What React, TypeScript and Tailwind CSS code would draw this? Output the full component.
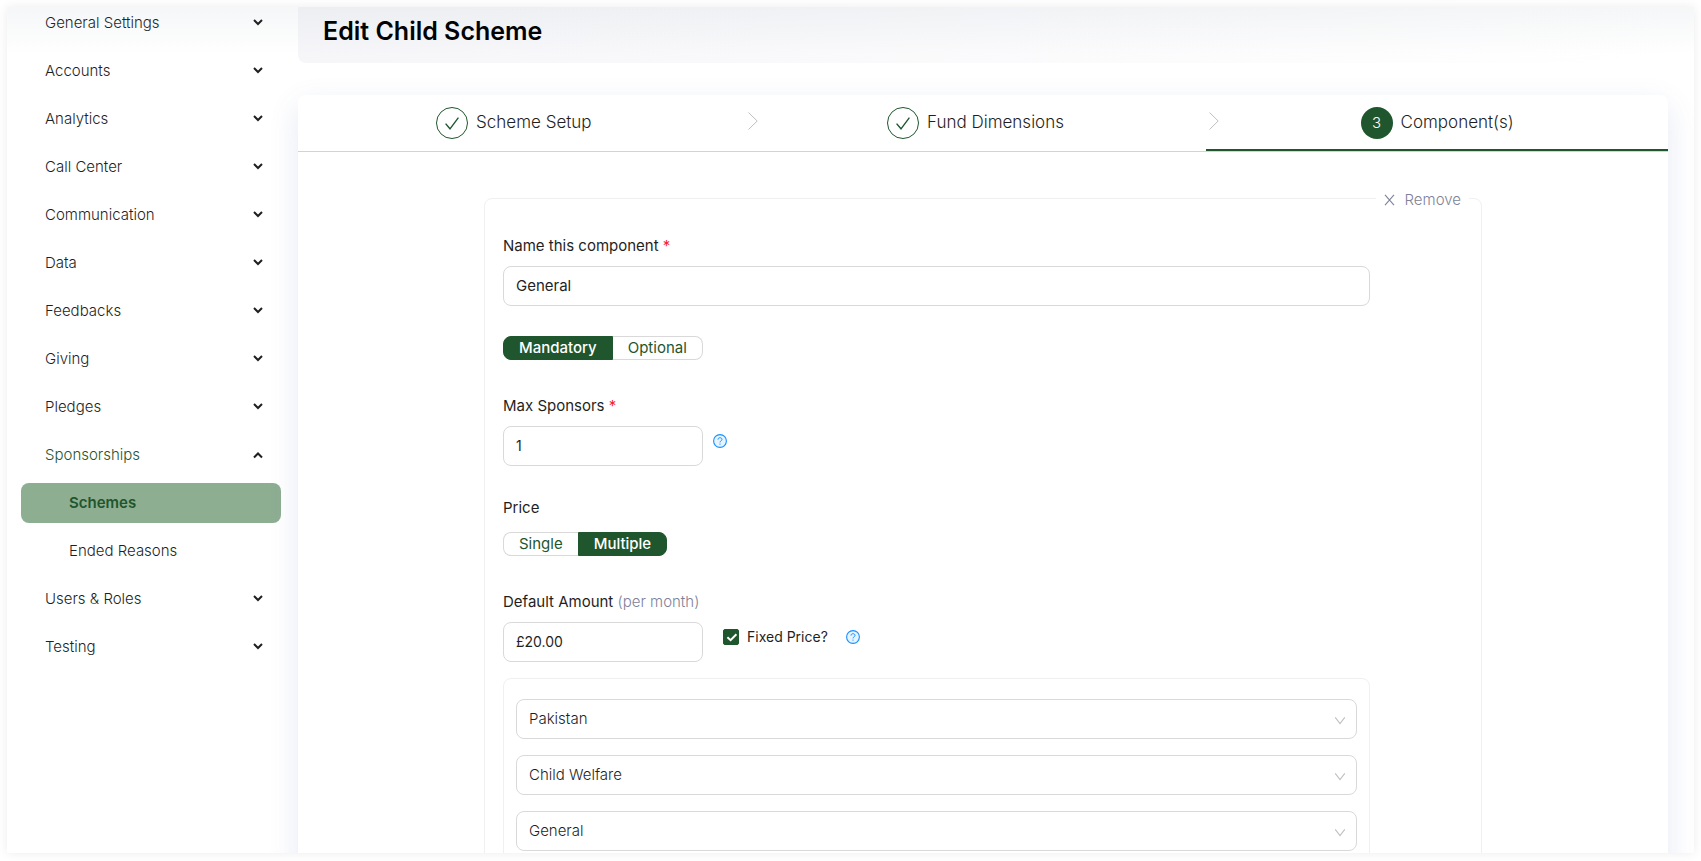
import { useState } from "react";

type Section = { label: string; open?: boolean; items?: { label: string; active?: boolean }[] };

const sections: Section[] = [
  { label: "General Settings" },
  { label: "Accounts" },
  { label: "Analytics" },
  { label: "Call Center" },
  { label: "Communication" },
  { label: "Data" },
  { label: "Feedbacks" },
  { label: "Giving" },
  { label: "Pledges" },
  {
    label: "Sponsorships",
    open: true,
    items: [{ label: "Schemes", active: true }, { label: "Ended Reasons" }],
  },
  { label: "Users & Roles" },
  { label: "Testing" },
];

function MenuChevron({ up }: { up?: boolean }) {
  return (
    <svg width="10" height="10" viewBox="0 0 10 10" fill="none" stroke="#1f1f1f" strokeWidth="2" aria-hidden="true">
      {up ? <path d="M1 7.5l4-4 4 4" /> : <path d="M1 2l4 4 4-4" />}
    </svg>
  );
}

function Sidebar() {
  return (
    <nav aria-label="Settings" className="-mt-1 w-[291px] shrink-0 pr-[17px] pl-3.5">
      <ul className="flex flex-col gap-2">
        {sections.map((s) => (
          <li key={s.label} className="flex flex-col gap-2">
            <button
              type="button"
              aria-expanded={!!s.open}
              className={`flex h-10 w-full items-center justify-between pr-[18px] pl-6 font-light ${s.open ? "text-[#1f562d]" : "text-[#1f1f1f]"}`}
            >
              {s.label}
              <MenuChevron up={s.open} />
            </button>
            {s.items?.map((item) => (
              <a
                key={item.label}
                href="#"
                className={`flex h-10 items-center rounded-lg pl-12 ${item.active ? "bg-[#8eae92] font-semibold text-[#1f562d]" : "font-light text-[#1f1f1f]"}`}
              >
                {item.label}
              </a>
            ))}
          </li>
        ))}
      </ul>
    </nav>
  );
}

function StepArrow() {
  return (
    <svg
      className="absolute top-[17px] left-[3px]"
      width="10"
      height="18"
      viewBox="0 0 10 18"
      fill="none"
      stroke="#bfbfbf"
      strokeWidth="1"
      aria-hidden="true"
    >
      <path d="M0.5 0.5L9.2 9L0.5 17.5" />
    </svg>
  );
}

function Steps() {
  const steps = [
    { title: "Scheme Setup", done: true },
    { title: "Fund Dimensions", done: true },
    { title: "Component(s)", done: false },
  ];
  return (
    <div className="border-b border-[#d0d3de]">
      <ol className="-ml-[15px] grid grid-cols-3">
        {steps.map((step, i) => (
          <li
            key={step.title}
            aria-current={step.done ? undefined : "step"}
            className={`relative flex h-14 items-center justify-center gap-2 border-b-2 pt-0.5 ${step.done ? "border-transparent" : "border-[#1f562d]"}`}
          >
            {i > 0 && <StepArrow />}
            {step.done ? (
              <span className="flex size-8 items-center justify-center rounded-full border border-[#1f562d]">
                <svg width="16" height="16" viewBox="0 0 16 16" fill="none" stroke="#1f562d" strokeWidth="1.4" aria-hidden="true">
                  <path d="M1.6 8.6L6 13.8L14.4 2.6" />
                </svg>
              </span>
            ) : (
              <span className="flex size-8 items-center justify-center rounded-full bg-[#1f562d] font-light text-white">{i + 1}</span>
            )}
            <span className="text-[17px] font-light text-[#1f1f1f]">{step.title}</span>
          </li>
        ))}
      </ol>
    </div>
  );
}

function HelpIcon() {
  return (
    <button type="button" aria-label="Help" className="flex size-3.5 shrink-0">
      <svg width="14" height="14" viewBox="0 0 14 14" fill="none" aria-hidden="true">
        <circle cx="7" cy="7" r="6.4" fill="#e6f4ff" stroke="#1890ff" strokeWidth="1.1" />
        <path d="M5 5.6C5 4.4 5.9 3.7 7 3.7S9 4.4 9 5.5C9 6.8 7 6.8 7 8.4" stroke="#1890ff" strokeWidth="1" />
        <circle cx="7" cy="10.1" r="0.65" fill="#1890ff" />
      </svg>
    </button>
  );
}

function Toggle({ options, value, onChange, label }: { options: string[]; value: string; onChange: (v: string) => void; label: string }) {
  return (
    <div role="group" aria-label={label} className="flex">
      {options.map((o) => (
        <button
          key={o}
          type="button"
          aria-pressed={o === value}
          onClick={() => onChange(o)}
          className={`flex h-6 items-center border px-[15px] first:rounded-l-lg last:rounded-r-lg ${
            o === value
              ? "border-[#1f562d] bg-[#1f562d] font-medium text-white"
              : "border-[#d9d9d9] bg-white text-[#1f562d] first:border-r-0 last:border-l-0"
          }`}
        >
          {o}
        </button>
      ))}
    </div>
  );
}

function Select({ label, options }: { label: string; options: string[] }) {
  return (
    <div className="relative">
      <select
        aria-label={label}
        className="h-10 w-full appearance-none rounded-lg border border-[#d9d9d9] bg-white px-3 font-light text-[#1f1f1f]"
      >
        {options.map((o) => (
          <option key={o}>{o}</option>
        ))}
      </select>
      <svg
        className="pointer-events-none absolute top-4 right-[11px]"
        width="12"
        height="12"
        viewBox="0 0 12 12"
        fill="none"
        stroke="#bfbfbf"
        strokeWidth="1.1"
        aria-hidden="true"
      >
        <path d="M1.2 2.4L6 8.6L10.8 2.4" />
      </svg>
    </div>
  );
}

const field = "h-10 rounded-lg border border-[#d9d9d9] bg-white px-3 pb-0.5 text-[#1f1f1f]";

function ComponentForm() {
  const [kind, setKind] = useState("Mandatory");
  const [price, setPrice] = useState("Multiple");
  return (
    <section aria-label="Component" className="relative mx-auto max-w-[998px] rounded-lg border border-[#f0f0f0] pt-9 pr-[111px] pb-10 pl-[18px]">
      <button
        type="button"
        className="absolute -top-[11px] right-3 flex h-6 items-center gap-2.5 bg-white px-2 font-light text-[#7e8299]"
      >
        <svg width="11" height="12" viewBox="0 0 11 12" fill="none" stroke="#7e8299" strokeWidth="1.1" aria-hidden="true">
          <path d="M1 0.8L10 11.2M10 0.8L1 11.2" />
        </svg>
        Remove
      </button>

      <label htmlFor="name" className="block h-[31px] leading-[22px]">
        Name this component <span className="text-[#f5222d]">*</span>
      </label>
      <input id="name" defaultValue="General" className={`${field} w-full`} />

      <div className="mt-[30px]">
        <Toggle label="Requirement" options={["Mandatory", "Optional"]} value={kind} onChange={setKind} />
      </div>

      <label htmlFor="sponsors" className="mt-[35px] block h-[31px] leading-[22px]">
        Max Sponsors <span className="text-[#f5222d]">*</span>
      </label>
      <div className="flex gap-2.5">
        <input id="sponsors" defaultValue="1" className={`${field} w-50 text-sm`} />
        <div className="pt-2">
          <HelpIcon />
        </div>
      </div>

      <p className="mt-[30px] h-9 leading-6">Price</p>
      <Toggle label="Price" options={["Single", "Multiple"]} value={price} onChange={setPrice} />

      <label htmlFor="amount" className="mt-[35px] block h-[31px] leading-[22px]">
        Default Amount <span className="font-light text-[#7e8299]">(per month)</span>
      </label>
      <div className="flex gap-5">
        <input id="amount" defaultValue="£20.00" className={`${field} w-50 text-sm`} />
        <div className="flex h-[30px] items-center gap-[18px]">
          <label className="flex items-center gap-2 text-sm">
            <span className="relative flex size-4">
              <input type="checkbox" defaultChecked className="peer size-4 appearance-none rounded-xs border border-[#1f562d] checked:bg-[#1f562d]" />
              <svg
                className="pointer-events-none invisible absolute inset-0 peer-checked:visible"
                width="16"
                height="16"
                viewBox="0 0 16 16"
                fill="none"
                stroke="#fff"
                strokeWidth="2"
                aria-hidden="true"
              >
                <path d="M4.4 8.2L7.6 11.2L13.4 5.2" />
              </svg>
            </span>
            Fixed Price?
          </label>
          <HelpIcon />
        </div>
      </div>

      <div className="mt-4 flex flex-col gap-4 rounded-lg border border-[#f0f0f0] px-3 py-5">
        <Select label="Location" options={["Pakistan"]} />
        <Select label="Theme" options={["Child Welfare"]} />
        <Select label="Stipulation" options={["General"]} />
      </div>
    </section>
  );
}

export default function App() {
  return (
    <div className="h-screen overflow-hidden bg-white px-[7px] pt-[7px] pb-2 font-['Inter','Liberation_Sans',sans-serif] text-[15px] text-[#1f1f1f]">
      <div className="relative flex h-full overflow-hidden bg-white shadow-[0_0_10px_rgba(0,0,0,0.08)]">
        <Sidebar />
        <main className="min-w-0 flex-1 pr-[26px]">
          <header className="h-14 rounded-b-lg bg-linear-to-r from-[#f6f6f9] to-white px-[25px]">
            <h1 className="text-[25px] leading-[48px] font-semibold text-black">Edit Child Scheme</h1>
          </header>
          <div className="mt-8 min-h-full rounded-lg bg-white shadow-[0_10px_30px_rgba(75,100,180,0.14)]">
            <Steps />
            <div className="px-6 pt-[46px]">
              <ComponentForm />
            </div>
          </div>
        </main>
        <div className="pointer-events-none absolute inset-x-0 top-0 h-12 bg-linear-to-b from-[rgba(60,90,110,0.05)] to-transparent" />
      </div>
    </div>
  );
}
